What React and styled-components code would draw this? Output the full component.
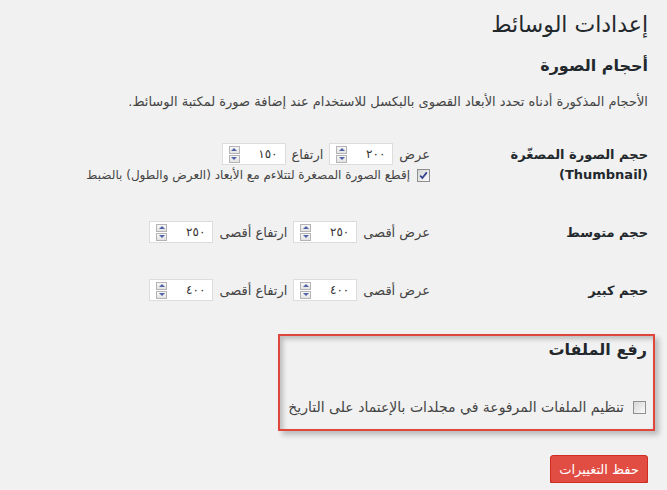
import React from "react";
import styled, { createGlobalStyle } from "styled-components";

const GlobalStyle = createGlobalStyle`
  body {
    margin: 0;
    background: #f1f1f1;
    font-family: Tahoma, "DejaVu Sans", sans-serif;
    color: #444;
  }
`;

const Wrap = styled.div`
  direction: rtl;
  padding: 9px 19px 0 12px;
  display: flex;
  flex-direction: column;
  align-items: stretch;
`;

const Title = styled.h1`
  margin: 0;
  font-size: 22px;
  font-weight: 400;
  line-height: 32px;
  color: #23282d;
`;

const SectionTitle = styled.h2`
  margin: ${(p) => p.$margin || "14px 0 0"};
  font-size: 16px;
  font-weight: 700;
  line-height: 22px;
  color: #23282d;
`;

const Description = styled.p`
  margin: 16px 0 0;
  font-size: 13px;
  line-height: 18px;
`;

const FormTable = styled.div`
  display: flex;
  flex-direction: column;
  margin-top: 14px;
`;

const Row = styled.div`
  display: grid;
  grid-template-columns: 218px 1fr;
  padding: 18px 0;
`;

const Label = styled.div`
  font-size: 13px;
  font-weight: 700;
  line-height: 20px;
  color: #23282d;
  padding-top: 2px;
`;

const Fields = styled.div`
  display: flex;
  flex-direction: column;
  gap: 2px;
`;

const Line = styled.div`
  display: flex;
  align-items: center;
  gap: 6px;
  font-size: 13px;
`;

const Field = styled.label`
  display: flex;
  align-items: center;
  width: 64px;
  height: 22px;
  box-sizing: border-box;
  border: 1px solid #ddd;
  background: #fff;
  padding: 0 7px 0 6px;
  gap: 4px;
`;

const ValueInput = styled.input`
  flex: 1;
  min-width: 0;
  border: 0;
  outline: 0;
  background: transparent;
  font-family: inherit;
  font-size: 12px;
  color: #333;
  direction: rtl;
  text-align: right;
  padding: 0;
`;

const Spinner = styled.span`
  display: flex;
  flex-direction: column;
  gap: 1px;
`;

const SpinBtn = styled.span`
  width: 11px;
  height: 8px;
  box-sizing: border-box;
  border: 1px solid #b4b4b4;
  background: linear-gradient(#f7f7f7, #e3e3e3);
  display: flex;
  align-items: center;
  justify-content: center;

  &::after {
    content: "";
    border-left: 3px solid transparent;
    border-right: 3px solid transparent;
    ${(p) =>
      p.$down
        ? "border-top: 3px solid #4e64a6;"
        : "border-bottom: 3px solid #4e64a6;"}
  }
`;

const Box = styled.span`
  width: 13px;
  height: 13px;
  box-sizing: border-box;
  border: 1px solid #8e8f8f;
  background: linear-gradient(135deg, #d6d6d6, #fbfbfb);
  display: inline-flex;
  align-items: center;
  justify-content: center;
  flex-shrink: 0;
`;

const CheckLine = styled.label`
  display: flex;
  align-items: center;
  gap: ${(p) => p.$gap || "7px"};
  font-size: ${(p) => p.$size || "12px"};
  line-height: ${(p) => p.$lh || "16px"};
  margin: ${(p) => p.$margin || "0"};
`;

const Highlight = styled.div`
  width: 377px;
  box-sizing: border-box;
  margin: 15px -7px 0 0;
  border: 2px solid #e0463c;
  padding: 3px 6px 13px 0;
  box-shadow: inset 3px 3px 5px rgba(0, 0, 0, 0.22),
    4px 4px 5px rgba(0, 0, 0, 0.22);
`;

const Actions = styled.div`
  display: flex;
  padding-top: 24px;
`;

const SaveButton = styled.button`
  height: 28px;
  padding: 0 8px;
  border: 1px solid #d02c21;
  border-radius: 3px;
  background: #e14d43;
  color: #fff;
  font-family: inherit;
  font-size: 13px;
  box-shadow: 0 1px 0 #ba281e;
  cursor: pointer;
`;

const NumberField = ({ value }) => (
  <Field>
    <ValueInput defaultValue={value} />
    <Spinner>
      <SpinBtn />
      <SpinBtn $down />
    </Spinner>
  </Field>
);

const Checkbox = ({ checked }) => (
  <Box>
    {checked && (
      <svg width="9" height="9" viewBox="0 0 9 9">
        <path d="M1.2 4.6 L3.4 7 L7.8 1.4" fill="none" stroke="#2d3f8e" strokeWidth="1.7" />
      </svg>
    )}
  </Box>
);

const sizes = [
  { label: "حجم متوسط", w: "٢٥٠", h: "٢٥٠" },
  { label: "حجم كبير", w: "٤٠٠", h: "٤٠٠" },
];

export default function App() {
  return (
    <Wrap>
      <GlobalStyle />
      <Title>إعدادات الوسائط</Title>
      <SectionTitle>أحجام الصورة</SectionTitle>
      <Description>
        الأحجام المذكورة أدناه تحدد الأبعاد القصوى بالبكسل للاستخدام عند إضافة صورة لمكتبة الوسائط.
      </Description>
      <FormTable>
        <Row>
          <Label>
            حجم الصورة المصغّرة
            <br />
            (Thumbnail)
          </Label>
          <Fields>
            <Line>
              عرض <NumberField value="٢٠٠" /> ارتفاع <NumberField value="١٥٠" />
            </Line>
            <CheckLine>
              <Checkbox checked />
              إقطع الصورة المصغرة لتتلاءم مع الأبعاد (العرض والطول) بالضبط
            </CheckLine>
          </Fields>
        </Row>
        {sizes.map((s) => (
          <Row key={s.label}>
            <Label>{s.label}</Label>
            <Fields>
              <Line>
                عرض أقصى <NumberField value={s.w} /> ارتفاع أقصى{" "}
                <NumberField value={s.h} />
              </Line>
            </Fields>
          </Row>
        ))}
      </FormTable>
      <Highlight>
        <SectionTitle $margin="0">رفع الملفات</SectionTitle>
        <CheckLine $size="14px" $lh="18px" $gap="9px" $margin="37px 1px 0 0">
          <Checkbox />
          تنظيم الملفات المرفوعة في مجلدات بالإعتماد على التاريخ
        </CheckLine>
      </Highlight>
      <Actions>
        <SaveButton>حفظ التغييرات</SaveButton>
      </Actions>
    </Wrap>
  );
}
